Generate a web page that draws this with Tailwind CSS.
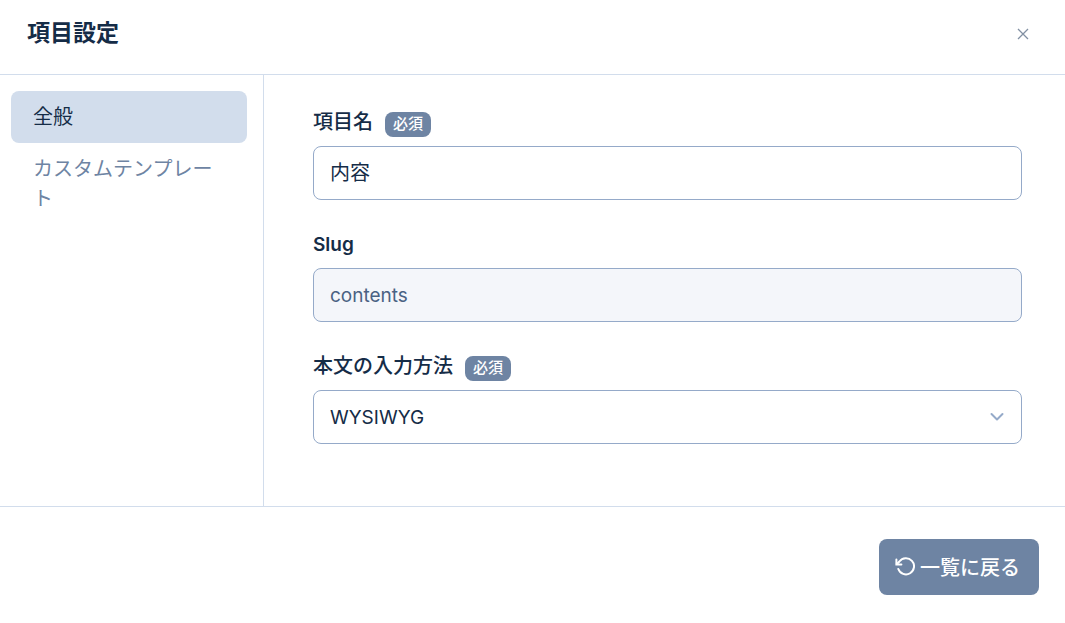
<!DOCTYPE html>
<html lang="ja">
<head>
  <meta charset="UTF-8" />
  <meta name="viewport" content="width=device-width, initial-scale=1.0"/>
  <title>項目設定</title>
  <script src="https://cdn.jsdelivr.net/npm/@tailwindcss/browser@4"></script>
</head>
<body class="bg-white font-[Inter,'Noto_Sans_CJK_JP',sans-serif] text-[20px] leading-[30px] text-[#152c47]">

  <div class="flex min-h-screen flex-col">
    <!-- ヘッダー -->
    <header class="flex items-start justify-between border-b border-[#d2ddec] pt-[18px] pr-[26px] pb-[26px] pl-[27px]">
      <h1 class="text-[23px] leading-[30px] font-bold">項目設定</h1>
      <button type="button" aria-label="閉じる" class="mt-2 mr-2 flex size-4 cursor-pointer items-center justify-center text-[#8290a3]">
        <svg class="size-3" viewBox="0 0 12 12" fill="none" stroke="currentColor" stroke-width="1.3">
          <path d="M1 1l10 10M11 1L1 11"/>
        </svg>
      </button>
    </header>

    <div class="flex min-h-[431px]">
      <!-- サイドメニュー -->
      <nav class="w-[264px] shrink-0 border-r border-[#d2ddec] py-4 pr-4 pl-[11px]">
        <a href="#general" class="block rounded-lg bg-[#d2ddec] px-[22px] py-[11px]">全般</a>
        <a href="#template" class="block px-[22px] py-[11px] text-[#6e84a3]">カスタムテンプレート</a>
      </nav>

      <!-- 設定フォーム -->
      <form class="flex-1 pt-[31px] pr-[43px] pl-[49px]">
        <div class="mb-7">
          <div class="mb-2 flex h-8 items-center">
            <label for="field-name" class="font-medium">項目名</label>
            <span class="mt-1 ml-3 rounded-lg bg-[#6e84a3] px-2 pb-[2px] text-[15px] leading-[23px] font-medium text-white">必須</span>
          </div>
          <input id="field-name" type="text" value="内容" class="block h-[54px] w-full rounded-lg border border-[#95aac9] px-4 pb-1 outline-none" />
        </div>

        <div class="mb-7">
          <div class="mb-2 flex h-8 items-center">
            <label for="field-slug" class="pt-[2px] text-[19px] font-semibold">Slug</label>
          </div>
          <input id="field-slug" type="text" value="contents" disabled class="block h-[54px] w-full rounded-lg border border-[#95aac9] bg-[#f4f6fa] px-4 text-[19px] text-[#4a6283]" />
        </div>

        <div>
          <div class="mb-2 flex h-8 items-center">
            <label for="field-editor" class="font-medium">本文の入力方法</label>
            <span class="mt-1 ml-3 rounded-lg bg-[#6e84a3] px-2 pb-[2px] text-[15px] leading-[23px] font-medium text-white">必須</span>
          </div>
          <div class="relative">
            <select id="field-editor" class="block h-[54px] w-full appearance-none rounded-lg border border-[#95aac9] bg-white px-4 pt-[2px] text-[19px] outline-none">
              <option>WYSIWYG</option>
            </select>
            <svg class="pointer-events-none absolute top-5 right-[18px] h-3 w-[14px] text-[#95aac9]" viewBox="0 0 14 12" fill="none" stroke="currentColor" stroke-width="2" stroke-linecap="round" stroke-linejoin="round">
              <path d="M1.5 4L7 9.5L12.5 4"/>
            </svg>
          </div>
        </div>
      </form>
    </div>

    <!-- フッター -->
    <footer class="flex flex-1 items-start justify-end border-t border-[#d2ddec] px-[26px] pt-8">
      <button type="button" class="flex h-14 cursor-pointer items-center gap-[5px] rounded-lg bg-[#6e84a3] pr-[19px] pl-4 font-medium text-white">
        <svg class="size-5" viewBox="0 0 20 20" fill="none" stroke="currentColor" stroke-width="2" stroke-linecap="round" stroke-linejoin="miter">
          <path d="M1.4 2.6V7.4H6.4"/>
          <path d="M1.8 7L4.4 4.5A8.1 8.1 0 1 1 3.3 12"/>
        </svg>
        <span class="pt-[2px]">一覧に戻る</span>
      </button>
    </footer>
  </div>

</body>
</html>
